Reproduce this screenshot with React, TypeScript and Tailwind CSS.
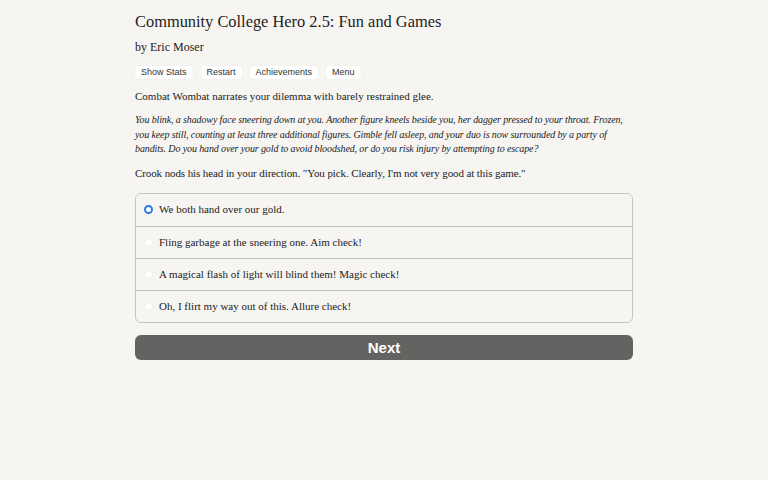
import { useState } from 'react'

const choices = [
  'We both hand over our gold.',
  'Fling garbage at the sneering one. Aim check!',
  'A magical flash of light will blind them! Magic check!',
  'Oh, I flirt my way out of this. Allure check!',
]

const menu = ['Show Stats', 'Restart', 'Achievements', 'Menu']

export default function App() {
  const [picked, setPicked] = useState(0)

  return (
    <div className="min-h-[480px] w-full bg-[#f7f5f2] text-[#222]">
      <div className="w-[498px] ml-[135px] pt-[12px] font-['Liberation_Serif',serif]">
        <h1 className="text-[16.4px] leading-[20px]">Community College Hero 2.5: Fun and Games</h1>
        <h2 className="mt-[7px] text-[12px] leading-[16px]">by Eric Moser</h2>

        <div className="mt-[11px] flex gap-[8px] font-['Liberation_Sans',sans-serif]">
          {menu.map((m) => (
            <button
              key={m}
              className="h-[13px] px-[6px] rounded-[2px] bg-white text-[9px] leading-[13px] text-[#333] shadow-[0_0_1px_rgba(0,0,0,0.15)]"
            >
              {m}
            </button>
          ))}
        </div>

        <p className="mt-[9px] text-[11px] leading-[16px]">
          Combat Wombat narrates your dilemma with barely restrained glee.
        </p>

        <p className="mt-[9px] text-[10px] leading-[14.5px] italic tracking-[-0.12px] whitespace-nowrap">
          You blink, a shadowy face sneering down at you. Another figure kneels beside you, her dagger pressed to your throat. Frozen,
          <br />
          you keep still, counting at least three additional figures. Gimble fell asleep, and your duo is now surrounded by a party of
          <br />
          bandits. Do you hand over your gold to avoid bloodshed, or do you risk injury by attempting to escape?
        </p>

        <p className="mt-[8px] text-[11px] leading-[16px] tracking-[-0.1px]">
          Crook nods his head in your direction. "You pick. Clearly, I'm not very good at this game."
        </p>

        <div className="mt-[12px] border border-[#c6c4c2] rounded-[6px] overflow-hidden">
          {choices.map((c, i) => (
            <label
              key={c}
              onClick={() => setPicked(i)}
              className={`flex items-center h-[32px] pl-[8px] text-[11px] cursor-pointer ${i > 0 ? 'border-t border-[#c6c4c2]' : ''}`}
            >
              <span
                className={`w-[9px] h-[9px] rounded-full mr-[6px] ${
                  picked === i
                    ? 'border-[2.5px] border-[#2d7ae0] bg-white'
                    : 'bg-white border border-[#efedeb]'
                }`}
              />
              <span>{c}</span>
            </label>
          ))}
        </div>

        <button className="mt-[12px] w-full h-[25px] rounded-[6px] bg-[#636361] text-white font-['Liberation_Sans',sans-serif] font-bold text-[15px] leading-[25px]">
          Next
        </button>
      </div>
    </div>
  )
}
